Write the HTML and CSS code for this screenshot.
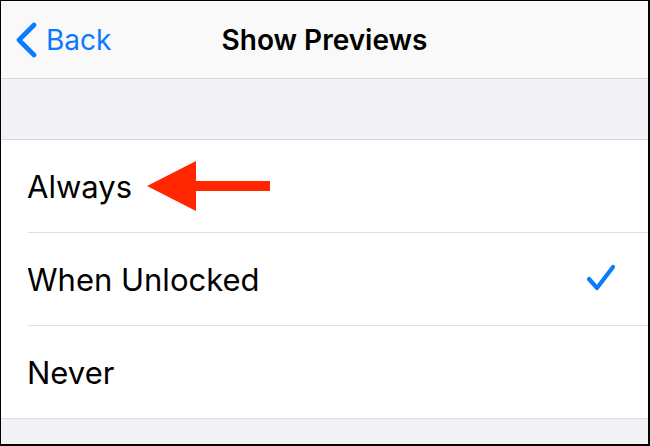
FILE: index.html
```html
<!DOCTYPE html>
<html>
<head>
<meta charset="utf-8">
<link rel="stylesheet" href="styles.css">
</head>
<body>
<div class="screen">
  <header class="nav">
    <a class="back">
      <svg class="chev" width="22" height="36" viewBox="0 0 22 36"><path d="M19 3 L4 18 L19 33" fill="none" stroke="#0a7aff" stroke-width="4.6" stroke-linecap="round" stroke-linejoin="round"/></svg>
      <span>Back</span>
    </a>
    <h1 class="title">Show Previews</h1>
  </header>
  <div class="spacer"></div>
  <ul class="list">
    <li class="row">
      <span class="label">Always</span>
      <svg class="arrow" width="124" height="52" viewBox="0 0 124 52"><polygon points="0,25 49,0 49,20 123,20 123,30 49,30 49,50" fill="#ff2600"/></svg>
    </li>
    <li class="row">
      <span class="label">When Unlocked</span>
      <svg class="check" width="32" height="30" viewBox="0 0 32 30"><path d="M3 15 L11 24 L27 3" fill="none" stroke="#0a7aff" stroke-width="4.2" stroke-linecap="round" stroke-linejoin="round"/></svg>
    </li>
    <li class="row">
      <span class="label">Never</span>
    </li>
  </ul>
  <div class="footer"></div>
</div>
</body>
</html>
```
FILE: styles.css
```css
html, body {
  margin: 0;
  padding: 0;
  background: #000;
}
body {
  padding: 1px 2px 2px 1px;
  width: 650px;
  height: 446px;
  box-sizing: border-box;
  overflow: hidden;
}
.screen {
  width: 647px;
  height: 443px;
  background: #f2f2f7;
  display: flex;
  flex-direction: column;
  font-family: Inter, "Liberation Sans", sans-serif;
}
.nav {
  height: 77px;
  flex: none;
  background: #f9f9f9;
  border-bottom: 1px solid #d8d8d8;
  display: flex;
  align-items: center;
  justify-content: center;
  position: relative;
}
.back {
  position: absolute;
  left: 14px;
  top: 0;
  bottom: 0;
  display: flex;
  align-items: center;
  gap: 9px;
  color: #0a7aff;
  font-size: 28px;
}
.chev {
  display: block;
}
.title {
  margin: 0;
  font-size: 28px;
  font-weight: 600;
  color: #000;
}
.spacer {
  height: 60px;
  flex: none;
  border-bottom: 1px solid #d8d8d8;
}
.list {
  list-style: none;
  margin: 0;
  padding: 0 0 0 27px;
  background: #fff;
  border-bottom: 1px solid #dcdcdc;
}
.row {
  height: 92px;
  display: flex;
  align-items: center;
  border-bottom: 1px solid #e0e0e0;
  padding-right: 30px;
}
.row:last-child {
  border-bottom: none;
}
.label {
  font-size: 31px;
  color: #000;
  margin-left: -1px;
}
.arrow {
  margin-left: 15px;
  margin-top: 2px;
}
.check {
  margin-left: auto;
}
.footer {
  flex: 1;
}
```
